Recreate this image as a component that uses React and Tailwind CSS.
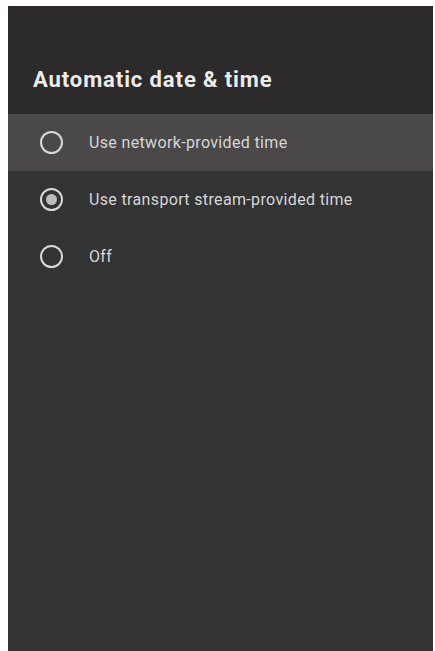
export default function App() {
  const options = [
    { label: 'Use network-provided time', checked: false },
    { label: 'Use transport stream-provided time', checked: true },
    { label: 'Off', checked: false },
  ];
  const focused = 0;

  return (
    <div className="w-[435px] h-[651px] bg-white pl-2 pr-[2px] pt-[6px] overflow-hidden" style={{ fontFamily: 'Roboto, "Noto Sans", sans-serif' }}>
      <div className="h-full flex flex-col bg-[#333333]">
        {/* Header */}
        <div className="h-[108px] bg-[#2c2a2a] flex items-end px-[25px] pb-[23px]">
          <h1 className="text-[22px] font-bold tracking-[0.9px] text-[#ececec] leading-none">Automatic date &amp; time</h1>
        </div>

        {/* Radio list */}
        <div className="flex flex-col">
          {options.map((opt, i) => (
            <div
              key={opt.label}
              className={`h-[57px] flex items-center pl-[32px] gap-[26px] ${i === focused ? 'bg-[#4a4849]' : ''}`}
            >
              <span className="w-[23px] h-[23px] rounded-full border-2 border-[#d8d8d8] flex items-center justify-center shrink-0">
                {opt.checked && <span className="w-[11px] h-[11px] rounded-full bg-[#bdbdbd]" />}
              </span>
              <span className="text-[16px] tracking-[0.35px] text-[#d6d6d6]">{opt.label}</span>
            </div>
          ))}
        </div>
      </div>
    </div>
  );
}
